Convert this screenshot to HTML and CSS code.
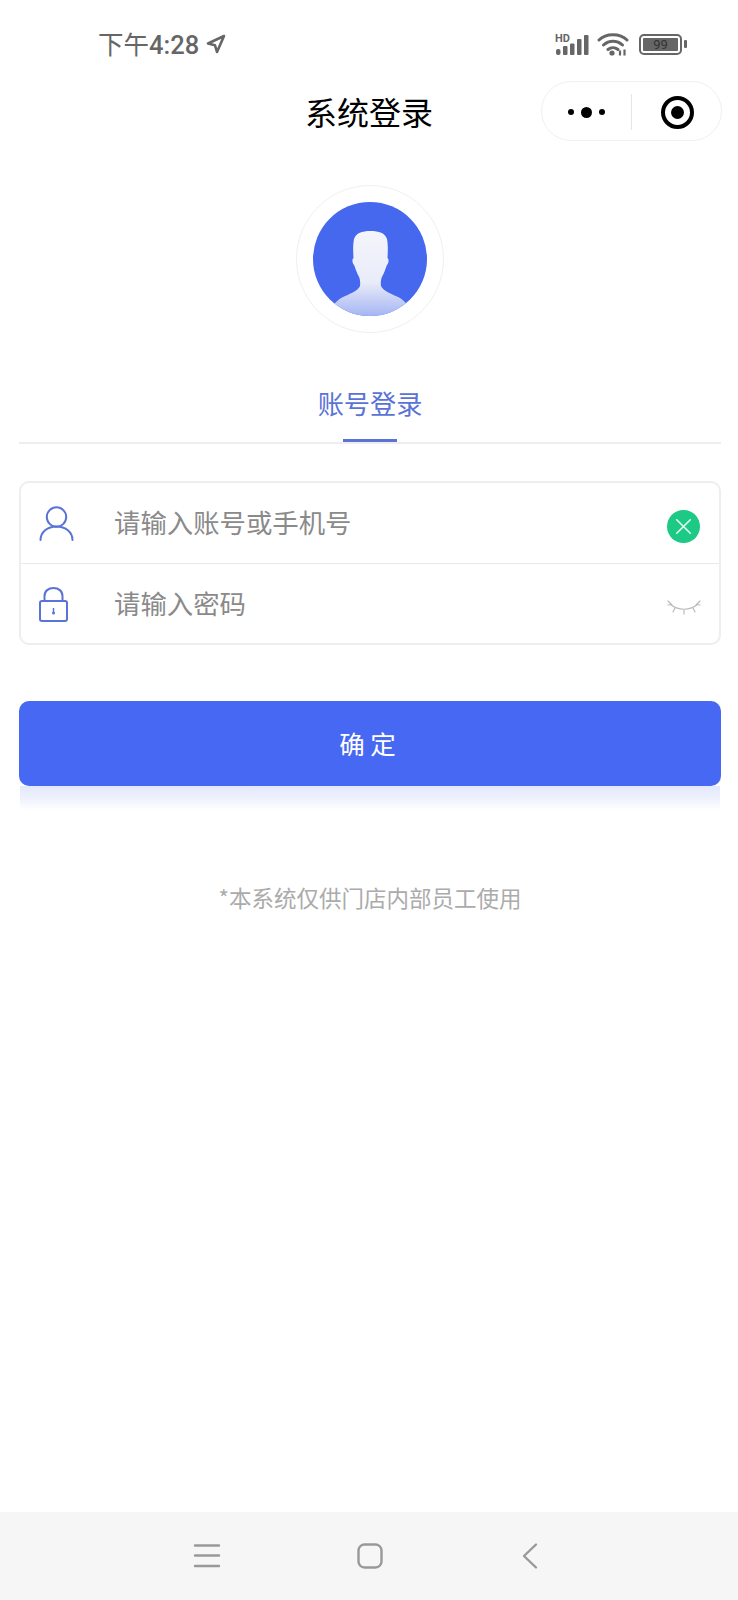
FILE: index.html
```html
<!DOCTYPE html>
<html lang="zh-CN">
  <head>
    <meta charset="UTF-8" />
    <meta name="viewport" content="width=device-width, initial-scale=1.0" />
    <title>系统登录</title>
    <link rel="stylesheet" href="styles.css">
  </head>
  <body>
    <div class="screen">
      <!-- Phone status bar -->
      <div class="status-bar">
        <div class="status-time">
          <span class="time-text"><span class="time-zh">下午</span>4:28</span>
          <svg class="status-arrow" width="20" height="20" viewBox="0 0 20 20">
            <path d="M18 2 2 9.500l7 1.800L11 18z" fill="none" stroke="#666" stroke-width="2.600" stroke-linejoin="round" />
          </svg>
        </div>
        <div class="status-icons">
          <svg class="signal-icon" width="34" height="28" viewBox="0 -6 34 28">
            <text x="0" y="8" class="hd-text">HD</text>
            <rect x="1" y="15" width="4.500" height="6" rx="2" fill="#666" />
            <rect x="8" y="12" width="4.500" height="9" rx="1" fill="#666" />
            <rect x="15" y="9.500" width="4.500" height="11.500" rx="1" fill="#666" />
            <rect x="22" y="5" width="4.500" height="16" rx="1" fill="#666" />
            <rect x="29" y="1" width="4.500" height="20" rx="1" fill="#666" />
          </svg>
          <svg width="32" height="24" viewBox="0 0 32 24">
            <path d="M2 8C9 1 23 1 30 8M6.500 13c5.500-5 13.500-5 19 0M11 17.500c3-2.500 7-2.500 10 0" fill="none" stroke="#666" stroke-width="3" stroke-linecap="round" />
            <circle cx="15" cy="21" r="2.600" fill="#666" />
            <path d="M23 23.500v-5M27.500 23.500v-6" stroke="#666" stroke-width="2.200" />
          </svg>
          <div class="battery">
            <div class="battery-body"><span class="battery-level">99</span></div>
            <div class="battery-tip"></div>
          </div>
        </div>
      </div>

      <!-- Title bar with mini program capsule -->
      <div class="title-bar">
        <div class="page-title">系统登录</div>
        <div class="capsule">
          <div class="capsule-side">
            <span class="dot"></span><span class="dot dot-big"></span><span class="dot"></span>
          </div>
          <div class="capsule-line"></div>
          <div class="capsule-side">
            <span class="target"></span>
          </div>
        </div>
      </div>

      <main class="login">
        <div class="avatar-ring">
          <svg class="avatar" width="114" height="114" viewBox="0 0 114 114">
            <defs>
              <linearGradient id="personFill" gradientUnits="userSpaceOnUse" x1="0" y1="29" x2="0" y2="114">
                <stop offset="0" stop-color="#f4f5fb" />
                <stop offset="0.6" stop-color="#e9ecf9" />
                <stop offset="1" stop-color="#a5b5f3" />
              </linearGradient>
              <clipPath id="avatarClip"><circle cx="57" cy="57" r="57" /></clipPath>
            </defs>
            <circle cx="57" cy="57" r="57" fill="#4568ee" />
            <path clip-path="url(#avatarClip)" fill="url(#personFill)" d="M57.500 29C49 29 43 31 41 37C40 42 40 48 40.500 56C39 57 39 61 41 63C42 65 43 69 45 73C47 76 47.500 80 47 84C45 89 36 92 28 96C25 98 23 100 20 103L20 120H95V103C92 100 90 98 87 96C79 92 70 89 68 84C67.500 80 68 76 70 73C72 69 73 65 74 63C76 61 76 57 74.500 56C75 48 75 42 74 37C72 31 66 29 57.500 29Z" />
          </svg>
        </div>

        <div class="tabs">
          <div class="tab-active">账号登录</div>
        </div>

        <div class="form-card">
          <div class="form-row">
            <svg class="row-icon" width="36" height="36" viewBox="0 0 36 36">
              <circle cx="17.500" cy="12" r="9.700" fill="none" stroke="#5a73d6" stroke-width="2" />
              <path d="M1.500 35c0-8 7-13.500 16-13.500s16 5.500 16 13.500" fill="none" stroke="#5a73d6" stroke-width="2" stroke-linecap="round" />
            </svg>
            <span class="row-text">请输入账号或手机号</span>
            <svg class="clear-icon" width="33" height="33" viewBox="0 0 34 34">
              <circle cx="17" cy="17" r="17" fill="#1cc985" />
              <path d="M10 10l14 14M24 10 10 24" stroke="#e8fbf3" stroke-width="1.600" stroke-linecap="round" />
            </svg>
          </div>
          <div class="form-row">
            <svg class="row-icon" width="36" height="36" viewBox="0 0 36 36">
              <path d="M5.500 15v-5c0-5 4-8 9-8s9 3 9 8v5" fill="none" stroke="#5a73d6" stroke-width="2" />
              <rect x="1" y="15" width="27" height="20" rx="2" fill="none" stroke="#5a73d6" stroke-width="2" />
              <circle cx="14.500" cy="27" r="1.500" fill="#5a73d6" />
              <path d="M14.500 22V27" stroke="#5a73d6" stroke-width="1.500" />
            </svg>
            <span class="row-text">请输入密码</span>
            <svg class="eye-icon" width="34" height="16" viewBox="0 0 34 16">
              <path d="M3 4c8 7 20 7 28 0" fill="none" stroke="#bbb" stroke-width="1.200" />
              <path d="M1 1l4 4M8 8l-2 4M17 10v4M26 8l2 4M33 1l-4 4M1 5l3-.500M33 5l-3-.500" fill="none" stroke="#bbb" stroke-width="1.200" stroke-linecap="round" />
            </svg>
          </div>
        </div>

        <button class="submit-btn">确 定</button>
        <div class="submit-glow"></div>

        <p class="notice">*本系统仅供门店内部员工使用</p>
      </main>

      <!-- Android navigation bar -->
      <div class="nav-bar">
        <svg width="28" height="24" viewBox="0 0 28 24">
          <path d="M2 1.500h24M2 11.500h24M2 22h24" stroke="#999" stroke-width="2.400" stroke-linecap="round" />
        </svg>
        <svg class="nav-home" width="28" height="28" viewBox="0 0 28 28">
          <rect x="2.500" y="2.500" width="23" height="23" rx="6" fill="none" stroke="#999" stroke-width="2.400" />
        </svg>
        <svg width="16" height="28" viewBox="0 0 16 28">
          <path d="M14 2.500 2 14l12 11.500" fill="none" stroke="#999" stroke-width="2.400" stroke-linecap="round" stroke-linejoin="round" />
        </svg>
      </div>
    </div>
  </body>
</html>
```
FILE: styles.css
```css
* {
  box-sizing: border-box;
}
body {
  margin: 0;
  background-color: #fff;
  color: #000;
  font-family: "Noto Sans CJK SC", "Noto Sans", sans-serif;
}
.screen {
  height: 1600px;
  display: flex;
  flex-direction: column;
  overflow: hidden;
}
.status-bar {
  height: 81px;
  padding: 19px 51px 0 98px;
  display: flex;
  justify-content: space-between;
  align-items: flex-start;
}
.status-time {
  display: flex;
  align-items: center;
  height: 50px;
  font-family: Roboto, "Noto Sans CJK SC", sans-serif;
  font-size: 25.500px;
  font-weight: 500;
  color: #666;
}
.time-text {
  margin-bottom: 4px;
}
.time-zh {
  font-weight: 400;
}
.status-arrow {
  margin-left: 7px;
}
.status-icons {
  display: flex;
  align-items: center;
  gap: 8px;
  height: 50px;
}
.signal-icon {
  margin-bottom: 4px;
}
.hd-text {
  font-family: Roboto, sans-serif;
  font-size: 11px;
  font-weight: 700;
  fill: #666;
}
.battery {
  display: flex;
  align-items: center;
  gap: 2px;
  margin-left: 2px;
}
.battery-body {
  width: 43px;
  height: 21px;
  border: 2px solid #666;
  border-radius: 5px;
  padding: 2px;
  display: flex;
}
.battery-level {
  flex: 1;
  background-color: #666;
  border-radius: 1px;
  color: #333;
  font-family: Roboto, sans-serif;
  font-size: 13px;
  line-height: 13px;
  text-align: center;
}
.battery-tip {
  width: 3px;
  height: 8px;
  background-color: #666;
  border-radius: 1px;
}
.title-bar {
  height: 60px;
  padding: 0 16px;
  display: grid;
  grid-template-columns: 1fr auto 1fr;
  align-items: center;
}
.page-title {
  grid-column: 2;
  font-size: 32px;
  line-height: 60px;
}
.capsule {
  grid-column: 3;
  justify-self: end;
  width: 181px;
  height: 60px;
  padding-top: 2px;
  border: 1px solid #f0f0f0;
  border-radius: 30px;
  display: flex;
  align-items: center;
}
.capsule-side {
  flex: 1;
  display: flex;
  justify-content: center;
  align-items: center;
  gap: 7px;
}
.capsule-line {
  width: 1px;
  height: 36px;
  background-color: #e6e6e6;
}
.dot {
  width: 6px;
  height: 6px;
  border-radius: 50%;
  background-color: #000;
}
.dot-big {
  width: 11px;
  height: 11px;
}
.target {
  width: 33px;
  height: 33px;
  margin-left: 1px;
  border: 4px solid #000;
  border-radius: 50%;
  position: relative;
}
.target::after {
  content: "";
  position: absolute;
  top: 6px;
  left: 6px;
  width: 13px;
  height: 13px;
  border-radius: 50%;
  background-color: #000;
}
.login {
  flex: 1;
  padding: 44px 17px 0 19px;
  display: flex;
  flex-direction: column;
}
.avatar-ring {
  align-self: center;
  width: 148px;
  height: 148px;
  border: 1px solid #f0f0f0;
  border-radius: 50%;
  display: flex;
  justify-content: center;
  align-items: center;
}
.tabs {
  margin-top: 51px;
  height: 60px;
  border-bottom: 2px solid #eeeeee;
  display: flex;
  justify-content: center;
}
.tab-active {
  position: relative;
  font-size: 26.200px;
  line-height: 38px;
  color: #5a73d6;
}
.tab-active::after {
  content: "";
  position: absolute;
  left: 25px;
  right: 25px;
  bottom: 0;
  height: 3px;
  background-color: #5a73d6;
}
.form-card {
  margin-top: 37px;
  height: 164px;
  border: 2px solid #eeeeee;
  border-radius: 10px;
}
.form-row {
  height: 80px;
  padding: 0 18px;
  display: flex;
  align-items: center;
}
.form-row + .form-row {
  border-top: 1px solid #e8e8e8;
}
.row-icon {
  flex-shrink: 0;
}
.row-text {
  flex: 1;
  margin: 0 0 3px 39px;
  font-size: 26.400px;
  color: #8a8a8a;
}
.clear-icon {
  margin: 6px 1px 0 0;
}
.eye-icon {
  margin-top: 9px;
}
.submit-btn {
  margin-top: 56px;
  height: 85px;
  padding: 0 5px 2px 0;
  border: none;
  border-radius: 10px;
  background-color: #4768f3;
  color: #fff;
  font-family: inherit;
  font-size: 25.500px;
}
.submit-glow {
  height: 24px;
  margin: 0 1px;
  background: linear-gradient(#e3e8fc, #eef1fd 50%, #fff);
}
.notice {
  margin: 71px 0 0;
  font-size: 22.500px;
  text-align: center;
  color: #ababab;
}
.nav-bar {
  height: 88px;
  padding: 0 200px 0 193px;
  background-color: #f6f6f6;
  display: flex;
  justify-content: space-between;
  align-items: center;
}
.nav-home {
  margin-right: 3px;
}
```
